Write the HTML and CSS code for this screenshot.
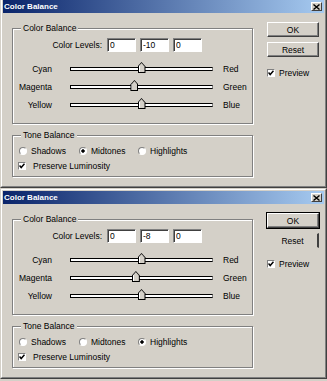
FILE: index.html
```html
<!DOCTYPE html>
<html lang="en">
<head>
  <meta charset="UTF-8" />
  <title>Color Balance</title>
  <link rel="stylesheet" href="styles.css">
</head>
<body>

<!-- premier dialogue : Midtones -->
<div class="dialog cropped">
  <div class="dialog-inner">
    <div class="titlebar">
      <span>Color Balance</span>
      <span class="close"><svg width="7" height="6" viewBox="0 0 7 6"><path d="M0.5 0.5L6.5 5.5M6.5 0.5L0.5 5.5" stroke="#000" stroke-width="1.4" fill="none"/></svg></span>
    </div>
    <div class="dialog-body">
      <div class="groups">
        <fieldset class="group balance">
          <legend>Color Balance</legend>
          <div class="levels">
            <span class="levels-label">Color Levels:</span>
            <input class="field" type="text" value="0">
            <input class="field" type="text" value="-10">
            <input class="field" type="text" value="0">
          </div>
          <div class="slider-row">
            <span class="left-label">Cyan</span>
            <div class="track"><span class="thumb" style="left: 50%"></span></div>
            <span class="right-label">Red</span>
          </div>
          <div class="slider-row">
            <span class="left-label">Magenta</span>
            <div class="track"><span class="thumb" style="left: 45%"></span></div>
            <span class="right-label">Green</span>
          </div>
          <div class="slider-row">
            <span class="left-label">Yellow</span>
            <div class="track"><span class="thumb" style="left: 50%"></span></div>
            <span class="right-label">Blue</span>
          </div>
        </fieldset>
        <fieldset class="group tone">
          <legend>Tone Balance</legend>
          <div class="tone-row">
            <span class="radio-item"><span class="radio"></span>Shadows</span>
            <span class="radio-item"><span class="radio checked"></span>Midtones</span>
            <span class="radio-item"><span class="radio"></span>Highlights</span>
          </div>
          <div class="check-row luminosity">
            <span class="checkbox"><svg width="6" height="6" viewBox="0 0 6 6"><path d="M0.5 2.5L2.2 4.5L5.5 0.8" stroke="#000" stroke-width="1.5" fill="none"/></svg></span>
            <span>Preserve Luminosity</span>
          </div>
        </fieldset>
      </div>
      <div class="side">
        <button class="btn">OK</button>
        <button class="btn reset">Reset</button>
        <div class="check-row preview">
          <span class="checkbox"><svg width="6" height="6" viewBox="0 0 6 6"><path d="M0.5 2.5L2.2 4.5L5.5 0.8" stroke="#000" stroke-width="1.5" fill="none"/></svg></span>
          <span>Preview</span>
        </div>
      </div>
    </div>
  </div>
</div>

<!-- second dialogue : Highlights -->
<div class="dialog">
  <div class="dialog-inner">
    <div class="titlebar">
      <span>Color Balance</span>
      <span class="close"><svg width="7" height="6" viewBox="0 0 7 6"><path d="M0.5 0.5L6.5 5.5M6.5 0.5L0.5 5.5" stroke="#000" stroke-width="1.4" fill="none"/></svg></span>
    </div>
    <div class="dialog-body">
      <div class="groups">
        <fieldset class="group balance">
          <legend>Color Balance</legend>
          <div class="levels">
            <span class="levels-label">Color Levels:</span>
            <input class="field" type="text" value="0">
            <input class="field" type="text" value="-8">
            <input class="field" type="text" value="0">
          </div>
          <div class="slider-row">
            <span class="left-label">Cyan</span>
            <div class="track"><span class="thumb" style="left: 50%"></span></div>
            <span class="right-label">Red</span>
          </div>
          <div class="slider-row">
            <span class="left-label">Magenta</span>
            <div class="track"><span class="thumb" style="left: 46%"></span></div>
            <span class="right-label">Green</span>
          </div>
          <div class="slider-row">
            <span class="left-label">Yellow</span>
            <div class="track"><span class="thumb" style="left: 50%"></span></div>
            <span class="right-label">Blue</span>
          </div>
        </fieldset>
        <fieldset class="group tone">
          <legend>Tone Balance</legend>
          <div class="tone-row">
            <span class="radio-item"><span class="radio"></span>Shadows</span>
            <span class="radio-item"><span class="radio"></span>Midtones</span>
            <span class="radio-item"><span class="radio checked"></span>Highlights</span>
          </div>
          <div class="check-row luminosity">
            <span class="checkbox"><svg width="6" height="6" viewBox="0 0 6 6"><path d="M0.5 2.5L2.2 4.5L5.5 0.8" stroke="#000" stroke-width="1.5" fill="none"/></svg></span>
            <span>Preserve Luminosity</span>
          </div>
        </fieldset>
      </div>
      <div class="side">
        <button class="btn default">OK</button>
        <button class="btn reset flat">Reset</button>
        <div class="check-row preview">
          <span class="checkbox"><svg width="6" height="6" viewBox="0 0 6 6"><path d="M0.5 2.5L2.2 4.5L5.5 0.8" stroke="#000" stroke-width="1.5" fill="none"/></svg></span>
          <span>Preview</span>
        </div>
      </div>
    </div>
  </div>
</div>

</body>
</html>
```

FILE: styles.css
```css
body {
  margin: 0;
  background: #d4d0c8;
  font-family: "Liberation Sans", Arial, sans-serif;
  font-size: 8.5px;
  color: #000;
}
.dialog {
  border: 1px solid;
  border-color: #d4d0c8 #404040 #404040 #d4d0c8;
}
.dialog.cropped {
  margin-top: -3px;
}
.dialog-inner {
  border: 1px solid;
  border-color: #fff #808080 #808080 #fff;
  padding: 1px;
}
.titlebar {
  height: 13px;
  display: flex;
  align-items: center;
  justify-content: space-between;
  padding-left: 1px;
  background: linear-gradient(to right, #0a246a, #a6caf0);
  color: #fff;
  font-weight: bold;
  font-size: 8px;
}
.close {
  width: 9px;
  height: 7px;
  margin-right: 2px;
  display: flex;
  align-items: center;
  justify-content: center;
  background: #d4d0c8;
  border: 1px solid;
  border-color: #fff #404040 #404040 #fff;
}
.dialog-body {
  display: flex;
  padding: 9px 0 8px 9px;
}
.groups {
  width: 241px;
}
.group {
  margin: 0;
  padding: 0;
  min-width: 0;
  border: 1px solid #808080;
  box-shadow: inset 1px 1px 0 #fff, 1px 1px 0 #fff;
}
.group legend {
  margin-left: 8px;
  padding: 0 2px;
  line-height: 11px;
  background: #d4d0c8;
}
.balance {
  margin-top: 1px;
  padding: 4px 0 9px;
}
.tone {
  margin-top: 6px;
  padding: 3px 0 3px;
}
.levels {
  display: flex;
  align-items: center;
  height: 14px;
}
.levels-label {
  width: 89px;
  margin-right: 5px;
  text-align: right;
}
.field {
  box-sizing: border-box;
  width: 29px;
  height: 14px;
  margin: 0 4px 0 0;
  padding: 0 2px;
  font: inherit;
  color: #000;
  background: #fff;
  border: 1px solid;
  border-color: #808080 #fff #fff #808080;
  box-shadow: inset 1px 1px 0 #404040;
  outline: none;
}
.slider-row {
  display: flex;
  align-items: center;
  height: 18px;
}
.levels + .slider-row {
  margin-top: 8px;
}
.left-label {
  width: 39px;
  text-align: right;
}
.track {
  position: relative;
  box-sizing: border-box;
  width: 143px;
  height: 4px;
  margin-left: 18px;
  background: #fff;
  border: 1px solid;
  border-color: #000 #808080 #000 #000;
}
.right-label {
  margin-left: 10px;
}
.thumb {
  position: absolute;
  top: -6px;
  width: 8px;
  height: 11px;
  margin-left: -4px;
  background: #000;
  clip-path: polygon(50% 0, 100% 40%, 100% 100%, 0 100%, 0 40%);
}
.thumb::after {
  content: "";
  position: absolute;
  left: 1px;
  top: 1px;
  right: 1px;
  bottom: 1px;
  background: linear-gradient(to right, #fff 1px, #d4d0c8 1px);
  clip-path: polygon(50% 0, 100% 40%, 100% 100%, 0 100%, 0 40%);
}
.tone-row {
  display: flex;
  align-items: center;
  height: 14px;
  padding-left: 6px;
}
.radio-item {
  display: flex;
  align-items: center;
  gap: 4px;
  width: 60px;
}
.radio-item:nth-child(2) {
  width: 59px;
}
.radio {
  box-sizing: border-box;
  width: 8px;
  height: 8px;
  border-radius: 50%;
  border: 1px solid;
  border-color: #808080 #fff #fff #808080;
  background: #fff;
}
.radio.checked {
  background: radial-gradient(circle, #000 1.4px, #fff 2px);
}
.check-row {
  display: flex;
  align-items: center;
  height: 14px;
}
.luminosity {
  margin-top: 1px;
  padding-left: 5px;
  gap: 7px;
}
.checkbox {
  box-sizing: border-box;
  width: 8px;
  height: 8px;
  display: flex;
  align-items: center;
  justify-content: center;
  background: #fff;
  border: 1px solid;
  border-color: #808080 #fff #fff #808080;
}
.side {
  display: flex;
  flex-direction: column;
  margin-left: 14px;
}
.btn {
  box-sizing: border-box;
  width: 52px;
  height: 15px;
  padding: 0;
  font: inherit;
  color: #000;
  background: #d4d0c8;
  border: 1px solid;
  border-color: #fff #404040 #404040 #fff;
  box-shadow: inset -1px -1px 0 #808080;
}
.btn.default {
  outline: 1px solid #000;
}
.btn.reset {
  margin-top: 5px;
}
.btn.flat {
  border-color: transparent;
  border-right: 2px solid #404040;
  box-shadow: none;
}
.preview {
  margin-top: 9px;
  gap: 4px;
}
```
